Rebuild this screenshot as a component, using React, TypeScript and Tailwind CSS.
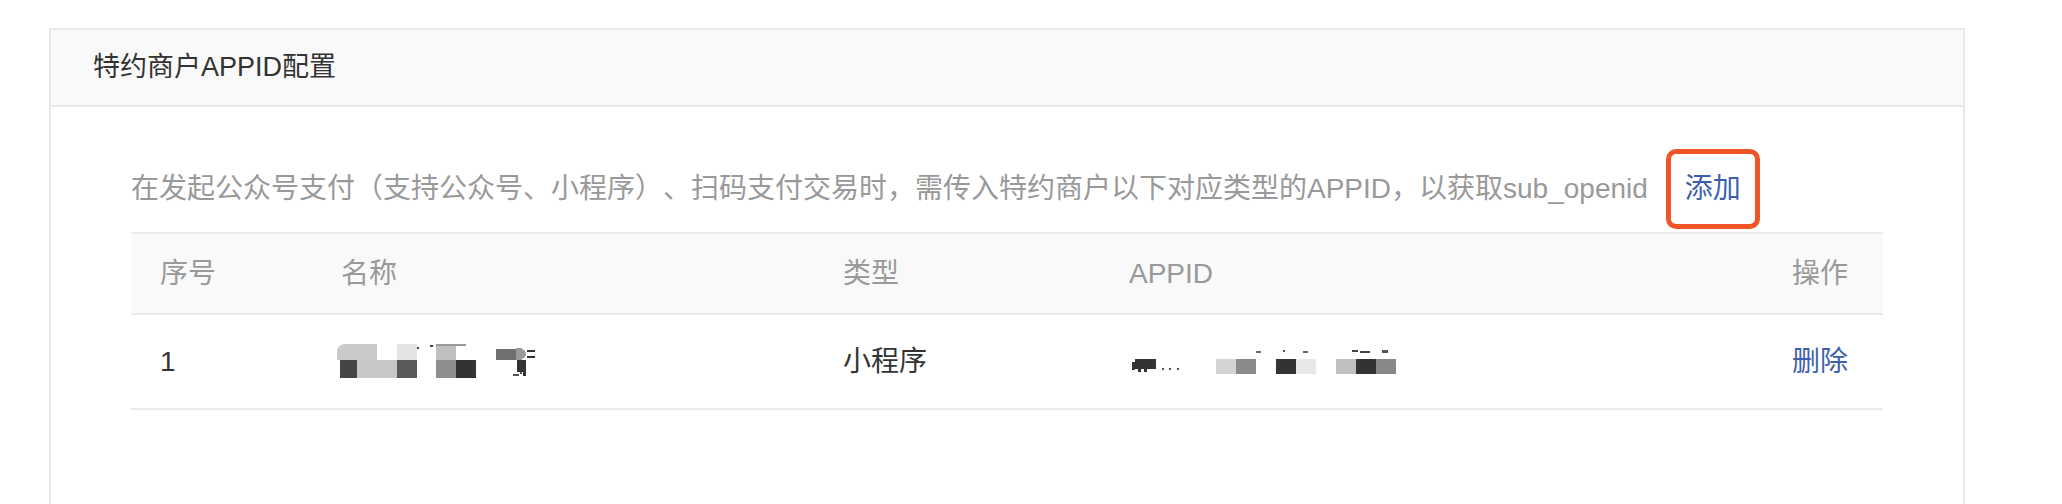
import React from "react";

const font = "font-['Liberation_Sans','Noto_Sans_CJK_SC',sans-serif]";

// pixelated redaction over the merchant name
function NameMosaic() {
  return (
    <svg width="204" height="36" viewBox="0 0 204 36" className="-ml-[4px] block">
      <rect x="0" y="0" width="40" height="16" rx="8" fill="#cacaca" />
      <rect x="8" y="0" width="32" height="16" fill="#cacaca" />
      <rect x="0" y="8" width="16" height="8" fill="#cacaca" />
      <rect x="60" y="0" width="20" height="16" fill="#e4e4e4" />
      <rect x="80" y="3" width="2" height="2" fill="#444" />
      <rect x="3" y="16" width="17" height="18" fill="#454545" />
      <rect x="20" y="16" width="40" height="18" fill="#c8c8c8" />
      <rect x="60" y="16" width="20" height="18" fill="#5a5a5a" />
      <rect x="93" y="1" width="3" height="2" fill="#444" />
      <rect x="99" y="0" width="20" height="16" fill="#c0c0c0" />
      <rect x="99" y="0" width="30" height="2" fill="#9a9a9a" />
      <rect x="99" y="16" width="20" height="18" fill="#8e8e8e" />
      <rect x="119" y="16" width="20" height="18" fill="#333" />
      <rect x="159" y="5" width="20" height="11" fill="#707070" />
      <rect x="179" y="4" width="6" height="12" fill="#9a9a9a" />
      <circle cx="184" cy="10" r="5" fill="#9a9a9a" />
      <rect x="180" y="16" width="8" height="12" fill="#333" />
      <rect x="190" y="6" width="8" height="2" fill="#333" />
      <rect x="190" y="12" width="8" height="2" fill="#333" />
      <rect x="186" y="16" width="3" height="16" fill="#333" />
      <rect x="176" y="30" width="6" height="2" fill="#555" />
      <rect x="183" y="28" width="2" height="2" fill="#555" />
    </svg>
  );
}

// pixelated redaction over the APPID value
function AppidMosaic() {
  return (
    <svg width="270" height="28" viewBox="0 0 270 28" className="block">
      <rect x="6" y="11" width="21" height="10" fill="#333" />
      <rect x="3" y="14" width="3" height="8" fill="#333" />
      <rect x="9" y="20" width="3" height="4" fill="#333" />
      <rect x="15" y="20" width="3" height="4" fill="#333" />
      <rect x="33" y="20" width="2" height="2" fill="#555" />
      <rect x="40" y="20" width="2" height="2" fill="#555" />
      <rect x="48" y="20" width="2" height="2" fill="#555" />
      <rect x="87" y="11" width="20" height="15" fill="#d4d4d4" />
      <rect x="107" y="11" width="20" height="15" fill="#8a8a8a" />
      <rect x="147" y="11" width="20" height="15" fill="#333" />
      <rect x="167" y="11" width="20" height="15" fill="#e8e8e8" />
      <rect x="207" y="11" width="20" height="15" fill="#c0c0c0" />
      <rect x="227" y="11" width="20" height="15" fill="#333" />
      <rect x="247" y="11" width="20" height="15" fill="#888" />
      <rect x="127" y="3" width="5" height="2" fill="#666" />
      <rect x="154" y="2" width="2" height="2" fill="#555" />
      <rect x="174" y="3" width="5" height="2" fill="#666" />
      <rect x="223" y="2" width="6" height="2" fill="#444" />
      <rect x="231" y="3" width="10" height="2" fill="#444" />
      <rect x="253" y="2" width="6" height="3" fill="#555" />
    </svg>
  );
}

export default function App() {
  return (
    <div className={`h-[504px] overflow-hidden bg-white pt-[28px] pl-[49px] pr-[97px] [text-spacing-trim:space-all] ${font}`}>
      <section className="h-[600px] border-2 border-[#e8e8e8] bg-white">
        <div className="flex h-[77px] items-center border-b-2 border-[#e8e8e8] bg-[#f9f9f9] pl-[42px] text-[27px] text-[#333]">
          特约商户APPID配置
        </div>

        <div className="px-[80px] pt-[42px]">
          <div className="flex h-[80px] items-center text-[28px] text-[#999]">
            <span>
              在发起公众号支付（支持公众号、小程序）、扫码支付交易时，需传入特约商户以下对应类型的APPID，以获取sub_openid
            </span>
            <span className="ml-[18px] flex h-[80px] w-[94px] items-center justify-center rounded-[10px] border-[5px] border-[#ef5527] text-[#3d5fad]">
              添加
            </span>
          </div>

          <div className="mt-[3px] border-t-2 border-[#ebebeb] text-[28px]">
            <div className="grid h-[81px] grid-cols-[181px_502px_286px_1fr_auto] items-center border-b-2 border-[#ebebeb] bg-[#f9f9f9] pl-[29px] pr-[35px] text-[#999]">
              <span>序号</span>
              <span>名称</span>
              <span>类型</span>
              <span>APPID</span>
              <span>操作</span>
            </div>
            <div className="grid h-[95px] grid-cols-[181px_502px_286px_1fr_auto] items-center border-b-2 border-[#ebebeb] pl-[29px] pr-[35px] text-[#333]">
              <span>1</span>
              <NameMosaic />
              <span>小程序</span>
              <AppidMosaic />
              <a className="cursor-pointer text-[#3d5fad]">删除</a>
            </div>
          </div>
        </div>
      </section>
    </div>
  );
}
